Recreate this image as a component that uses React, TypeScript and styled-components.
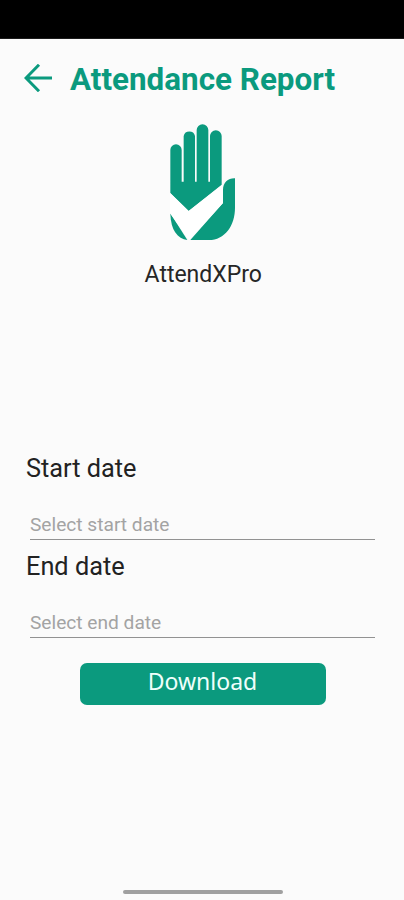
import React from "react";
import styled, { createGlobalStyle } from "styled-components";

const GREEN = "#0b9a7e";

const GlobalStyle = createGlobalStyle`
  * { box-sizing: border-box; }
  body {
    margin: 0;
    background: #fbfbfb;
    font-family: Roboto, "Liberation Sans", sans-serif;
  }
`;

const Screen = styled.main`
  display: flex;
  flex-direction: column;
  width: 404px;
  height: 900px;
  overflow: hidden;
  background: #fbfbfb;
`;

const StatusBar = styled.div`
  height: 39px;
  flex: none;
  background: #000;
  border-bottom: 1px solid #1c1c1c;
`;

const Header = styled.header`
  display: flex;
  align-items: center;
  height: 79px;
  flex: none;
  padding: 1px 0 0 24px;
`;

const BackButton = styled.button`
  display: flex;
  width: 28px;
  height: 28px;
  margin: 0 18px 3px 0;
  padding: 0;
  border: 0;
  background: none;
`;

const Title = styled.h1`
  margin: 1px 0 0;
  color: ${GREEN};
  font-size: 31.4px;
  font-weight: 700;
  line-height: 40px;
  white-space: nowrap;
`;

const Brand = styled.section`
  display: flex;
  flex-direction: column;
  align-items: center;
  height: 332px;
  flex: none;
  padding: 6px 0 0 2.5px;
`;

const Logo = styled.svg`
  display: block;
  width: 66px;
  height: 117px;
`;

const BrandName = styled.div`
  margin-top: 19px;
  font-size: 23px;
  line-height: 30px;
  color: #262626;
`;

const Form = styled.form`
  display: flex;
  flex-direction: column;
  padding: 0 29px 0 26px;
`;

const Field = styled.label`
  display: flex;
  flex-direction: column;
  height: 98px;
`;

const FieldLabel = styled.span`
  height: 36px;
  font-size: 25.3px;
  line-height: 38px;
  color: #222;
`;

const DateInput = styled.input`
  height: 40px;
  margin: 14px 0 0 4px;
  padding: 10px 0 0;
  border: 0;
  border-bottom: 1px solid #929292;
  outline: 0;
  background: transparent;
  font: 19.15px/24px Roboto, "Liberation Sans", sans-serif;
  &::placeholder { color: #a3a3a3; opacity: 1; }
`;

const DownloadButton = styled.button`
  width: 246px;
  height: 42px;
  margin: 17px 0 0 53.5px;
  padding: 0 0 7px;
  border: 0;
  border-radius: 7px;
  background: ${GREEN};
  color: #effffb;
  font: 23px/32px "Noto Sans", sans-serif;
`;

const HomeIndicator = styled.div`
  width: 160px;
  height: 4px;
  margin: auto auto 6px 123px;
  border-radius: 2px;
  background: #a0a0a0;
`;

const fields = [
  { label: "Start date", hint: "Select start date" },
  { label: "End date", hint: "Select end date" },
];

function HandLogo() {
  return (
    <Logo viewBox="61 41 198 351" aria-hidden="true">
      <g fill={GREEN}>
        <path d="M62 248V119a17 17 0 0 1 34 0V214H102V77a17.500 17.500 0 0 1 34 0V214H141V59a17.500 17.500 0 0 1 35 0V214H181V77a17.500 17.500 0 0 1 35 0V223L117 302Z" />
        <path d="M62 309L113 389C84 386 63 360 62 309Z" />
        <path d="M122 389L220 278V239C220 216 236 203 256 204V292C256 346 225 389 178 389Z" />
      </g>
      <path d="M61 248L117 302L220 222V278L118 390L61 309Z" fill="#fff" />
    </Logo>
  );
}

export default function App() {
  return (
    <>
      <GlobalStyle />
      <Screen>
        <StatusBar />
        <Header>
          <BackButton aria-label="Back">
            <svg width="28" height="28" viewBox="0 0 28 28" fill="none" stroke={GREEN} strokeWidth="3">
              <path d="M15 .8L2 14L15 27.200M2 14H28" />
            </svg>
          </BackButton>
          <Title>Attendance Report</Title>
        </Header>
        <Brand>
          <HandLogo />
          <BrandName>AttendXPro</BrandName>
        </Brand>
        <Form onSubmit={(event) => event.preventDefault()}>
          {fields.map(({ label, hint }) => (
            <Field key={label}>
              <FieldLabel>{label}</FieldLabel>
              <DateInput placeholder={hint} />
            </Field>
          ))}
          <DownloadButton>Download</DownloadButton>
        </Form>
        <HomeIndicator />
      </Screen>
    </>
  );
}
